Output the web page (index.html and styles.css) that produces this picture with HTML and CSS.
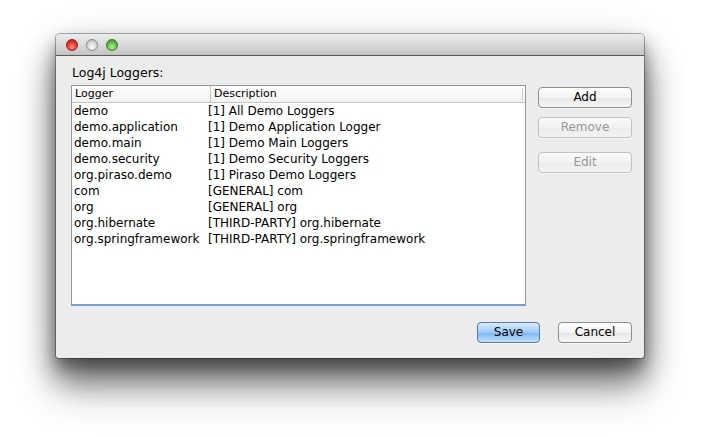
FILE: index.html
```html
<!DOCTYPE html>
<html>
<head>
<meta charset="utf-8">
<link rel="stylesheet" href="styles.css">
</head>
<body>
<div class="window">
  <div class="titlebar">
    <span class="light red"></span>
    <span class="light gray"></span>
    <span class="light green"></span>
  </div>
  <div class="content">
    <div class="label">Log4j Loggers:</div>
    <div class="main">
      <div class="table">
        <div class="thead">
          <div class="h1">Logger</div>
          <div class="h2">Description</div>
        </div>
        <div class="row"><div class="c1">demo</div><div class="c2">[1] All Demo Loggers</div></div>
        <div class="row"><div class="c1">demo.application</div><div class="c2">[1] Demo Application Logger</div></div>
        <div class="row"><div class="c1">demo.main</div><div class="c2">[1] Demo Main Loggers</div></div>
        <div class="row"><div class="c1">demo.security</div><div class="c2">[1] Demo Security Loggers</div></div>
        <div class="row"><div class="c1">org.piraso.demo</div><div class="c2">[1] Piraso Demo Loggers</div></div>
        <div class="row"><div class="c1">com</div><div class="c2">[GENERAL] com</div></div>
        <div class="row"><div class="c1">org</div><div class="c2">[GENERAL] org</div></div>
        <div class="row"><div class="c1">org.hibernate</div><div class="c2">[THIRD-PARTY] org.hibernate</div></div>
        <div class="row"><div class="c1">org.springframework</div><div class="c2">[THIRD-PARTY] org.springframework</div></div>
      </div>
      <div class="side">
        <div class="btn">Add</div>
        <div class="btn disabled">Remove</div>
        <div class="btn disabled edit">Edit</div>
      </div>
    </div>
    <div class="footer">
      <div class="btn primary save">Save</div>
      <div class="btn cancel">Cancel</div>
    </div>
  </div>
</div>
</body>
</html>
```

FILE: styles.css
```css
html, body {
  margin: 0;
  padding: 0;
  background: #ffffff;
}
body {
  padding: 34px 0 0 56px;
  min-height: 437px;
  box-sizing: border-box;
  font-family: "DejaVu Sans", "Liberation Sans", sans-serif;
  color: #000;
}
.window {
  width: 588px;
  height: 324px;
  border-radius: 4px 4px 3px 3px;
  background: #ececec;
  box-shadow:
    0 0 0 1px rgba(0,0,0,0.3),
    0 8px 14px rgba(0,0,0,0.3),
    0 20px 26px rgba(0,0,0,0.35),
    0 32px 40px rgba(0,0,0,0.3),
    0 10px 40px rgba(0,0,0,0.2);
  display: flex;
  flex-direction: column;
}
.titlebar {
  height: 21px;
  flex: none;
  border-radius: 4px 4px 0 0;
  background: linear-gradient(#ececec, #d6d6d6 60%, #c2c2c2);
  border-bottom: 1px solid #595959;
  display: flex;
  align-items: center;
  padding-left: 10px;
  gap: 8px;
  box-sizing: content-box;
}
.light {
  width: 12px;
  height: 12px;
  border-radius: 50%;
  box-sizing: border-box;
  margin-top: 1px;
}
.red {
  background: radial-gradient(circle at 50% 70%, #ff8f8a 0%, #e8342b 55%, #a9191a 100%);
  border: 1px solid #8f1d18;
}
.gray {
  background: radial-gradient(circle at 50% 70%, #fafafa 0%, #d7d7d7 55%, #a9a9a9 100%);
  border: 1px solid #8b8b8b;
}
.green {
  background: radial-gradient(circle at 50% 70%, #b9f09c 0%, #5fba42 55%, #2f7d21 100%);
  border: 1px solid #3b7a2c;
}
.content {
  flex: 1;
  display: flex;
  flex-direction: column;
  padding: 0 12px 0 15px;
}
.label {
  font-size: 12.5px;
  margin-top: 9px;
  height: 20px;
  line-height: 16px;
  padding-left: 1px;
}
.main {
  display: flex;
  gap: 12px;
}
.table {
  width: 453px;
  height: 218px;
  background: #fff;
  border: 1px solid #8d98a5;
  border-bottom: 2px solid #6fa0d6;
  box-sizing: content-box;
  font-size: 12px;
}
.thead {
  display: flex;
  height: 16px;
  font-size: 11px;
  line-height: 16px;
  background: linear-gradient(#ffffff, #f2f2f2);
  border-bottom: 1px solid #c6c6c6;
}
.h1 {
  width: 135px;
  padding-left: 3px;
  border-right: 1px solid #c8c8c8;
}
.h2 {
  flex: 1;
  padding-left: 3px;
  margin-right: 2px;
  margin-top: 2px;
  height: 12px;
  line-height: 12px;
  border-right: 1px solid #c8c8c8;
}
.row {
  display: flex;
  height: 16px;
  line-height: 16px;
}
.c1 {
  width: 134px;
  padding-left: 2px;
  white-space: nowrap;
}
.c2 {
  padding-left: 0;
  white-space: nowrap;
}
.side {
  display: flex;
  flex-direction: column;
  padding-top: 2px;
}
.btn {
  width: 94px;
  height: 21px;
  box-sizing: border-box;
  border: 1px solid #8e8e8e;
  border-radius: 4px;
  background: linear-gradient(#ffffff, #f3f3f3 50%, #e6e6e6 51%, #f6f6f6);
  font-size: 12px;
  line-height: 19px;
  text-align: center;
  box-shadow: 0 1px 0 rgba(255,255,255,0.6);
}
.side .btn + .btn {
  margin-top: 9px;
}
.side .edit {
  margin-top: 14px !important;
}
.btn.disabled {
  color: #9a9a9a;
  border-color: #c2c2c2;
  background: linear-gradient(#fafafa, #f2f2f2 50%, #ebebeb 51%, #f3f3f3);
}
.footer {
  display: flex;
  justify-content: flex-end;
  margin-top: 16px;
  gap: 18px;
}
.save {
  width: 63px;
  border-color: #5a78a8;
  background: linear-gradient(#d8ebfd, #9ccbf5 50%, #7ab5ee 51%, #c1e2fd);
}
.cancel {
  width: 74px;
}
```
